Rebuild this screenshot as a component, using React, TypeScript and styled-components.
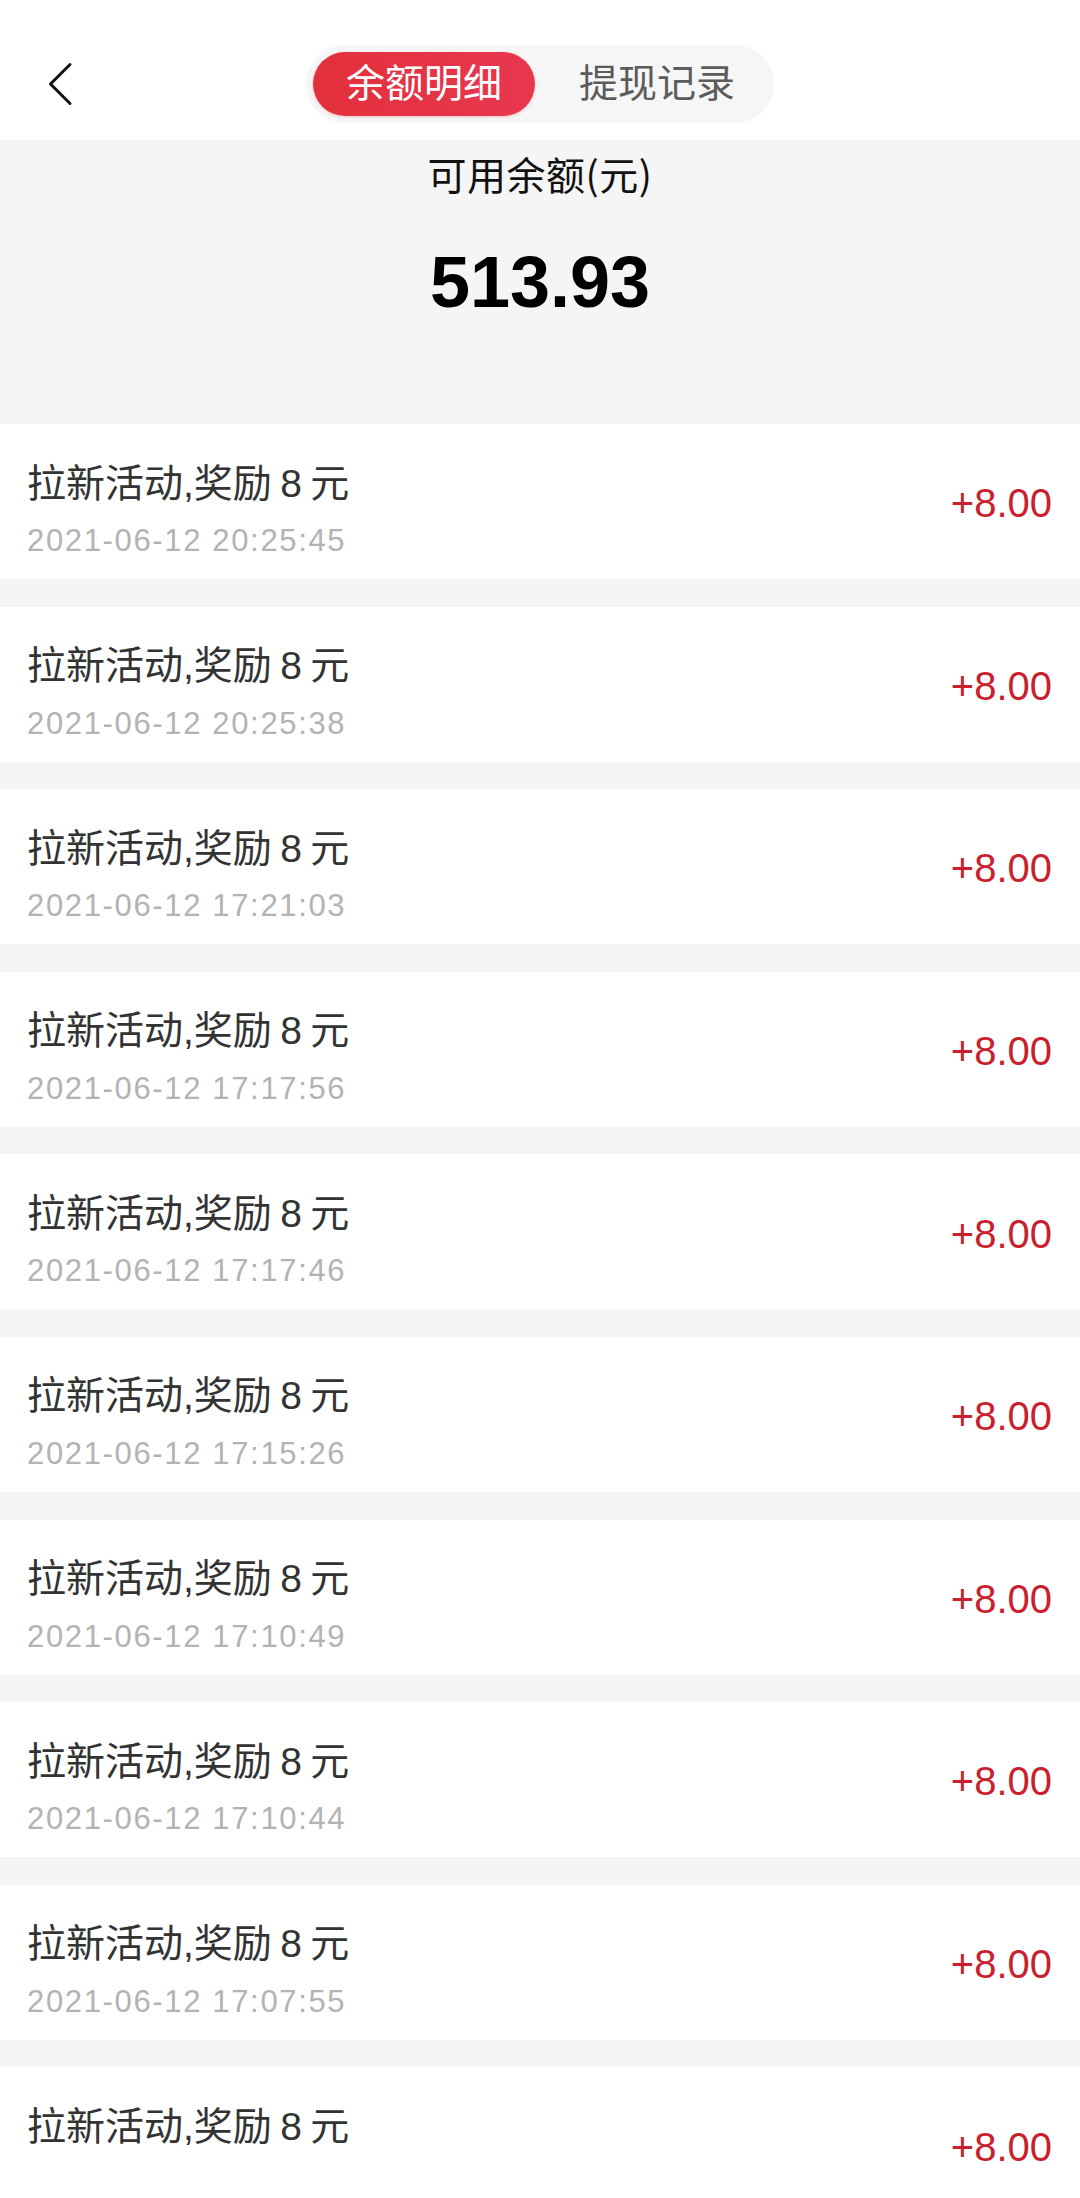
import React from "react";
import styled, { createGlobalStyle } from "styled-components";

const GlobalStyle = createGlobalStyle`
  html, body {
    margin: 0;
    padding: 0;
    background: #f5f5f5;
  }
  body {
    font-family: "Liberation Sans", "Noto Sans CJK SC", sans-serif;
    -webkit-font-smoothing: antialiased;
  }
  * { box-sizing: border-box; }
`;

const Page = styled.div`
  width: 1080px;
  background: #f5f5f5;
`;

const Header = styled.header`
  height: 140px;
  padding-top: 28px;
  background: #ffffff;
  display: grid;
  grid-template-columns: 1fr auto 1fr;
  align-items: center;
`;

const BackButton = styled.button`
  justify-self: start;
  margin-left: 44px;
  width: 32px;
  height: 48px;
  padding: 0;
  border: none;
  background: transparent;
  display: flex;
  align-items: center;
  justify-content: center;
`;

const Tabs = styled.div`
  display: flex;
  padding: 7px;
  height: 78px;
  border-radius: 39px;
  background: #f6f6f6;
`;

const Tab = styled.div<{ $active?: boolean; $w: number }>`
  width: ${(p) => p.$w}px;
  height: 64px;
  border-radius: 32px;
  display: flex;
  align-items: center;
  justify-content: center;
  padding-left: ${(p) => (p.$active ? 0 : 12)}px;
  font-size: 39px;
  line-height: 46px;
  color: ${(p) => (p.$active ? "#ffffff" : "#5c5c5c")};
  background: ${(p) =>
    p.$active ? "linear-gradient(90deg, #e3303c 0%, #e8374f 100%)" : "transparent"};
  box-shadow: ${(p) => (p.$active ? "0 1px 3px rgba(220, 40, 60, 0.25)" : "none")};
`;

const BalancePanel = styled.section`
  height: 284px;
  padding-top: 10px;
  display: flex;
  flex-direction: column;
  align-items: center;
  background: #f5f5f5;
`;

const BalanceLabel = styled.div`
  font-family: "Noto Sans CJK SC", sans-serif;
  font-size: 39px;
  line-height: 46px;
  color: #111111;
  letter-spacing: 0.5px;
`;

const BalanceValue = styled.div`
  margin-top: 46px;
  font-size: 72px;
  line-height: 80px;
  font-weight: 700;
  color: #000000;
`;

const List = styled.div`
  display: flex;
  flex-direction: column;
  gap: 27.6px;
`;

const Row = styled.div`
  height: 155px;
  background: #ffffff;
  display: flex;
  justify-content: space-between;
  align-items: flex-start;
  padding: 36.5px 28px 0 27px;
`;

const Info = styled.div`
  display: flex;
  flex-direction: column;
`;

const Title = styled.div`
  font-size: 39px;
  line-height: 46px;
  color: #333333;
  word-spacing: -2.5px;
  white-space: nowrap;
`;

const DateText = styled.div`
  margin-top: 16.5px;
  font-size: 31px;
  line-height: 36px;
  letter-spacing: 1.65px;
  color: #b3b3b3;
  white-space: nowrap;
`;

const Amount = styled.div`
  align-self: center;
  margin-top: -33px;
  font-size: 40px;
  line-height: 46px;
  color: #c91f2e;
`;

const items: { time?: string }[] = [
  { time: "2021-06-12 20:25:45" },
  { time: "2021-06-12 20:25:38" },
  { time: "2021-06-12 17:21:03" },
  { time: "2021-06-12 17:17:56" },
  { time: "2021-06-12 17:17:46" },
  { time: "2021-06-12 17:15:26" },
  { time: "2021-06-12 17:10:49" },
  { time: "2021-06-12 17:10:44" },
  { time: "2021-06-12 17:07:55" },
  {},
];

export default function App() {
  return (
    <>
      <GlobalStyle />
      <Page>
        <Header>
          <BackButton aria-label="返回">
            <svg width="26" height="44" viewBox="0 0 26 44" fill="none">
              <path
                d="M23 2.5 L3.5 22 L23 41.5"
                stroke="#111111"
                strokeWidth="3"
                strokeLinecap="round"
                strokeLinejoin="round"
              />
            </svg>
          </BackButton>
          <Tabs>
            <Tab $active $w={222}>余额明细</Tab>
            <Tab $w={232}>提现记录</Tab>
          </Tabs>
          <div />
        </Header>
        <BalancePanel>
          <BalanceLabel>可用余额(元)</BalanceLabel>
          <BalanceValue>513.93</BalanceValue>
        </BalancePanel>
        <List>
          {items.map((it, i) => (
            <Row key={i}>
              <Info>
                <Title>拉新活动,奖励 8 元</Title>
                {it.time && <DateText>{it.time}</DateText>}
              </Info>
              <Amount>+8.00</Amount>
            </Row>
          ))}
        </List>
      </Page>
    </>
  );
}
